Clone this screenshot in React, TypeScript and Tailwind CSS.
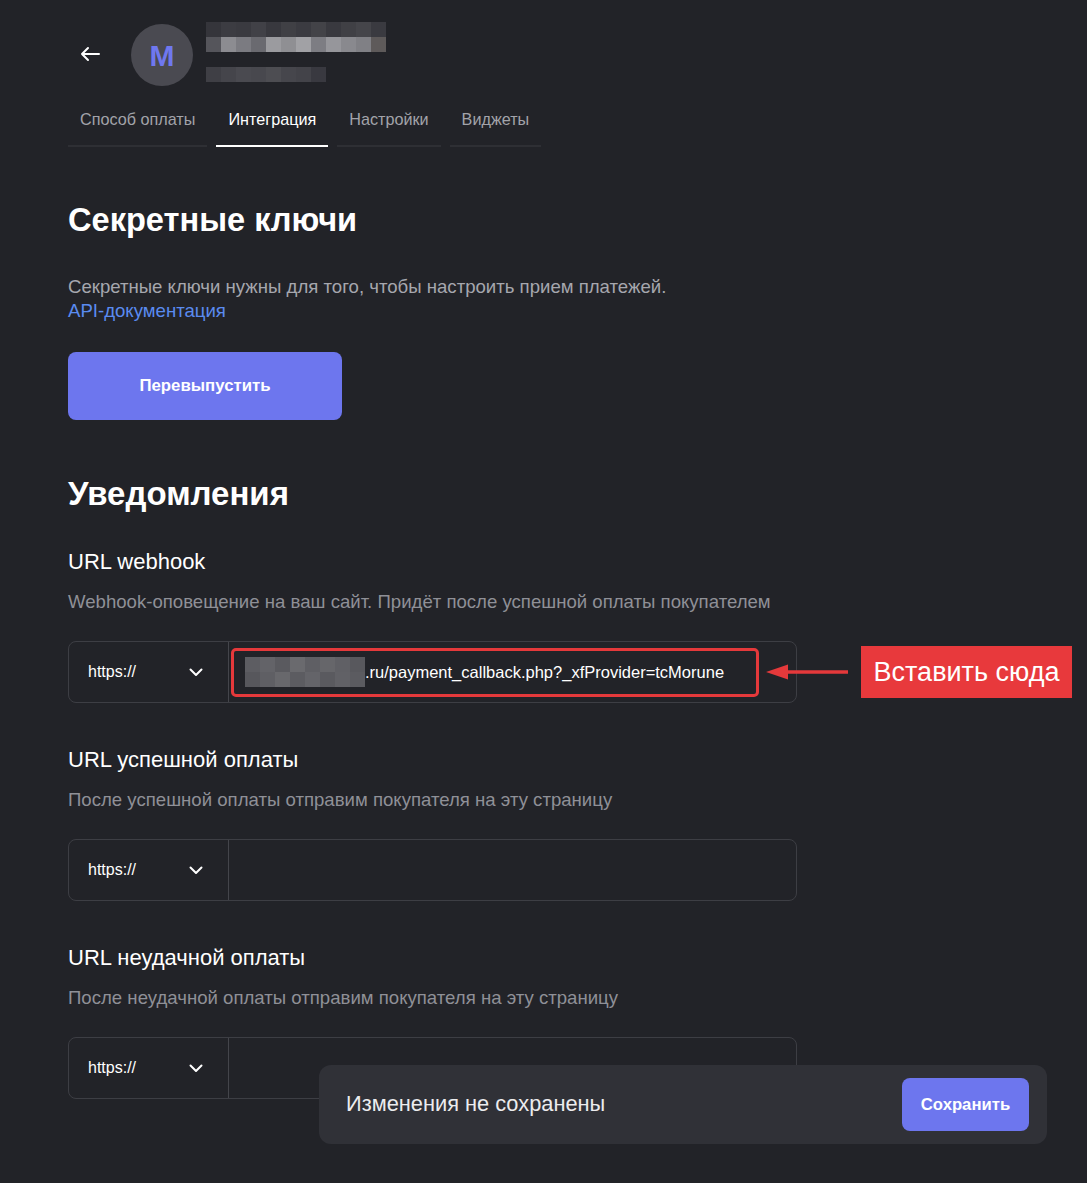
import React from 'react';

const FONT = { fontFamily: '"Liberation Sans", Arial, sans-serif' };

// pixelated "blurred" blocks from the screenshot
const nameTop = ['#35353b', '#3c3c42', '#3a3a40', '#414147', '#38383e', '#404045', '#3b3b41', '#434348', '#39393f', '#404045', '#45454a', '#3a3a40'];
const nameBottom = ['#55555b', '#8c8c91', '#7b7b81', '#6a6a70', '#9b9b9f', '#8f8f93', '#a1a1a5', '#7d7d83', '#96969b', '#89898e', '#808085', '#5e5a5a'];
const subLine = ['#3f3f45', '#45454b', '#4a4a50', '#48484e', '#4d4d52', '#46464c', '#434349', '#393940'];
const urlTop = ['#5d5d62', '#636368', '#5a5a5f', '#6a6a6e', '#5f5f64', '#66666a', '#606065', '#58585d'];
const urlBottom = ['#57575c', '#5f5f64', '#68686c', '#5c5c61', '#646469', '#5a5a5f', '#616166', '#5b5b60'];

function Pixels({ rows, size = 15 }: { rows: string[][]; size?: number }) {
  return (
    <div className="flex flex-col">
      {rows.map((row, ri) => (
        <div key={ri} className="flex">
          {row.map((c, ci) => (
            <div key={ci} style={{ background: c, width: size, height: size }} />
          ))}
        </div>
      ))}
    </div>
  );
}

function Chevron() {
  return (
    <svg width="14" height="9" viewBox="0 0 14 9" fill="none">
      <path d="M1.5 1.5 7 7l5.5-5.5" stroke="white" strokeWidth="2" strokeLinecap="round" strokeLinejoin="round" />
    </svg>
  );
}

function UrlInput({ children }: { children?: React.ReactNode }) {
  return (
    <div className="flex h-[62px] w-[729px] rounded-lg border border-[#3d3e44]">
      <div className="flex w-[160px] shrink-0 items-center justify-between rounded-l-lg border-r border-[#44454b] pl-[19px] pr-[25px]">
        <span className="text-[16px] text-white">https://</span>
        <Chevron />
      </div>
      <div className="flex flex-1 items-center">{children}</div>
    </div>
  );
}

function Field({ title, hint, children, first }: { title: string; hint: string; children?: React.ReactNode; first?: boolean }) {
  return (
    <div className={first ? 'mt-[34px]' : 'mt-[43px]'}>
      <h3 className="text-[22px] leading-[28px] text-white">{title}</h3>
      <p className="mt-[14px] text-[18.6px] leading-[24px] text-[#8f9097]">{hint}</p>
      <div className="relative mt-[27px]">{children ?? <UrlInput />}</div>
    </div>
  );
}

const tabs = [
  { label: 'Способ оплаты', active: false },
  { label: 'Интеграция', active: true },
  { label: 'Настройки', active: false },
  { label: 'Виджеты', active: false },
];

export default function App() {
  return (
    <div className="min-h-[1183px] bg-[#222328] px-[68px] pt-[24px] pb-[84px]" style={FONT}>
      {/* header */}
      <div className="flex items-start">
        <div className="mt-[22px] ml-[12px] mr-[31px]">
          <svg width="20" height="16" viewBox="0 0 20 16" fill="none">
            <path d="M19 8H2M8 2 2 8l6 6" stroke="white" strokeWidth="2" strokeLinecap="round" strokeLinejoin="round" />
          </svg>
        </div>
        <div className="flex h-[62px] w-[62px] items-center justify-center rounded-full bg-[#4a4a51]">
          <span className="text-[30px] font-bold text-[#6f78ef]">M</span>
        </div>
        <div className="ml-[13px] flex flex-col">
          <div className="-mt-[2px]">
            <Pixels rows={[nameTop, nameBottom]} />
          </div>
          <div className="mt-[15px]">
            <Pixels rows={[subLine]} />
          </div>
        </div>
      </div>

      {/* tabs */}
      <div className="mt-[10px] flex gap-[9px]">
        {tabs.map((t) => (
          <div
            key={t.label}
            className={`px-3 pt-[11px] pb-[14px] text-[16.2px] leading-[24px] border-b-2 ${
              t.active ? 'border-white text-white' : 'border-[#2e2f34] text-[#a2a3aa]'
            }`}
          >
            {t.label}
          </div>
        ))}
      </div>

      {/* secret keys */}
      <h2 className="mt-[53px] text-[32.6px] font-bold leading-[40px] text-white">Секретные ключи</h2>
      <p className="mt-[35px] text-[18.6px] leading-[24px] text-[#a6a7ae]">
        Секретные ключи нужны для того, чтобы настроить прием платежей.
        <br />
        <a className="text-[#5a8bf0]">API-документация</a>
      </p>
      <button className="mt-[29px] flex h-[68px] w-[274px] items-center justify-center rounded-lg bg-[#6d76ee] text-[16.8px] font-bold text-white">
        Перевыпустить
      </button>

      {/* notifications */}
      <h2 className="mt-[54px] text-[33px] font-bold leading-[40px] text-white">Уведомления</h2>

      <Field first title="URL webhook" hint="Webhook-оповещение на ваш сайт. Придёт после успешной оплаты покупателем">
        <UrlInput>
          <div className="ml-[2px] flex h-[49px] w-[528px] items-center rounded-[5px] border-[3px] border-[#e5393b] pl-[11px]">
            <Pixels rows={[urlTop, urlBottom]} />
            <span className="text-[16.5px] text-white">.ru/payment_callback.php?_xfProvider=tcMorune</span>
          </div>
        </UrlInput>
        {/* annotation */}
        <svg className="absolute left-[698px] top-[21px]" width="84" height="20" viewBox="0 0 84 20" fill="none">
          <path d="M82 10H14" stroke="#e5393b" strokeWidth="3.5" />
          <path d="M0 10 22 2.5v15Z" fill="#e5393b" />
        </svg>
        <div className="absolute left-[793px] top-[5px] flex h-[52px] w-[211px] items-center justify-center bg-[#e8393c] text-[27px] text-white">
          Вставить сюда
        </div>
      </Field>

      <Field title="URL успешной оплаты" hint="После успешной оплаты отправим покупателя на эту страницу" />
      <Field title="URL неудачной оплаты" hint="После неудачной оплаты отправим покупателя на эту страницу" />

      {/* unsaved changes toast */}
      <div className="fixed bottom-[39px] left-[319px] flex h-[79px] w-[728px] items-center justify-between rounded-xl bg-[#303137] pl-[27px] pr-[18px]">
        <span className="text-[21.8px] text-[#ececee]">Изменения не сохранены</span>
        <button className="flex h-[53px] w-[127px] items-center justify-center rounded-lg bg-[#6d76ee] text-[16.7px] font-bold text-white">
          Сохранить
        </button>
      </div>
    </div>
  );
}
